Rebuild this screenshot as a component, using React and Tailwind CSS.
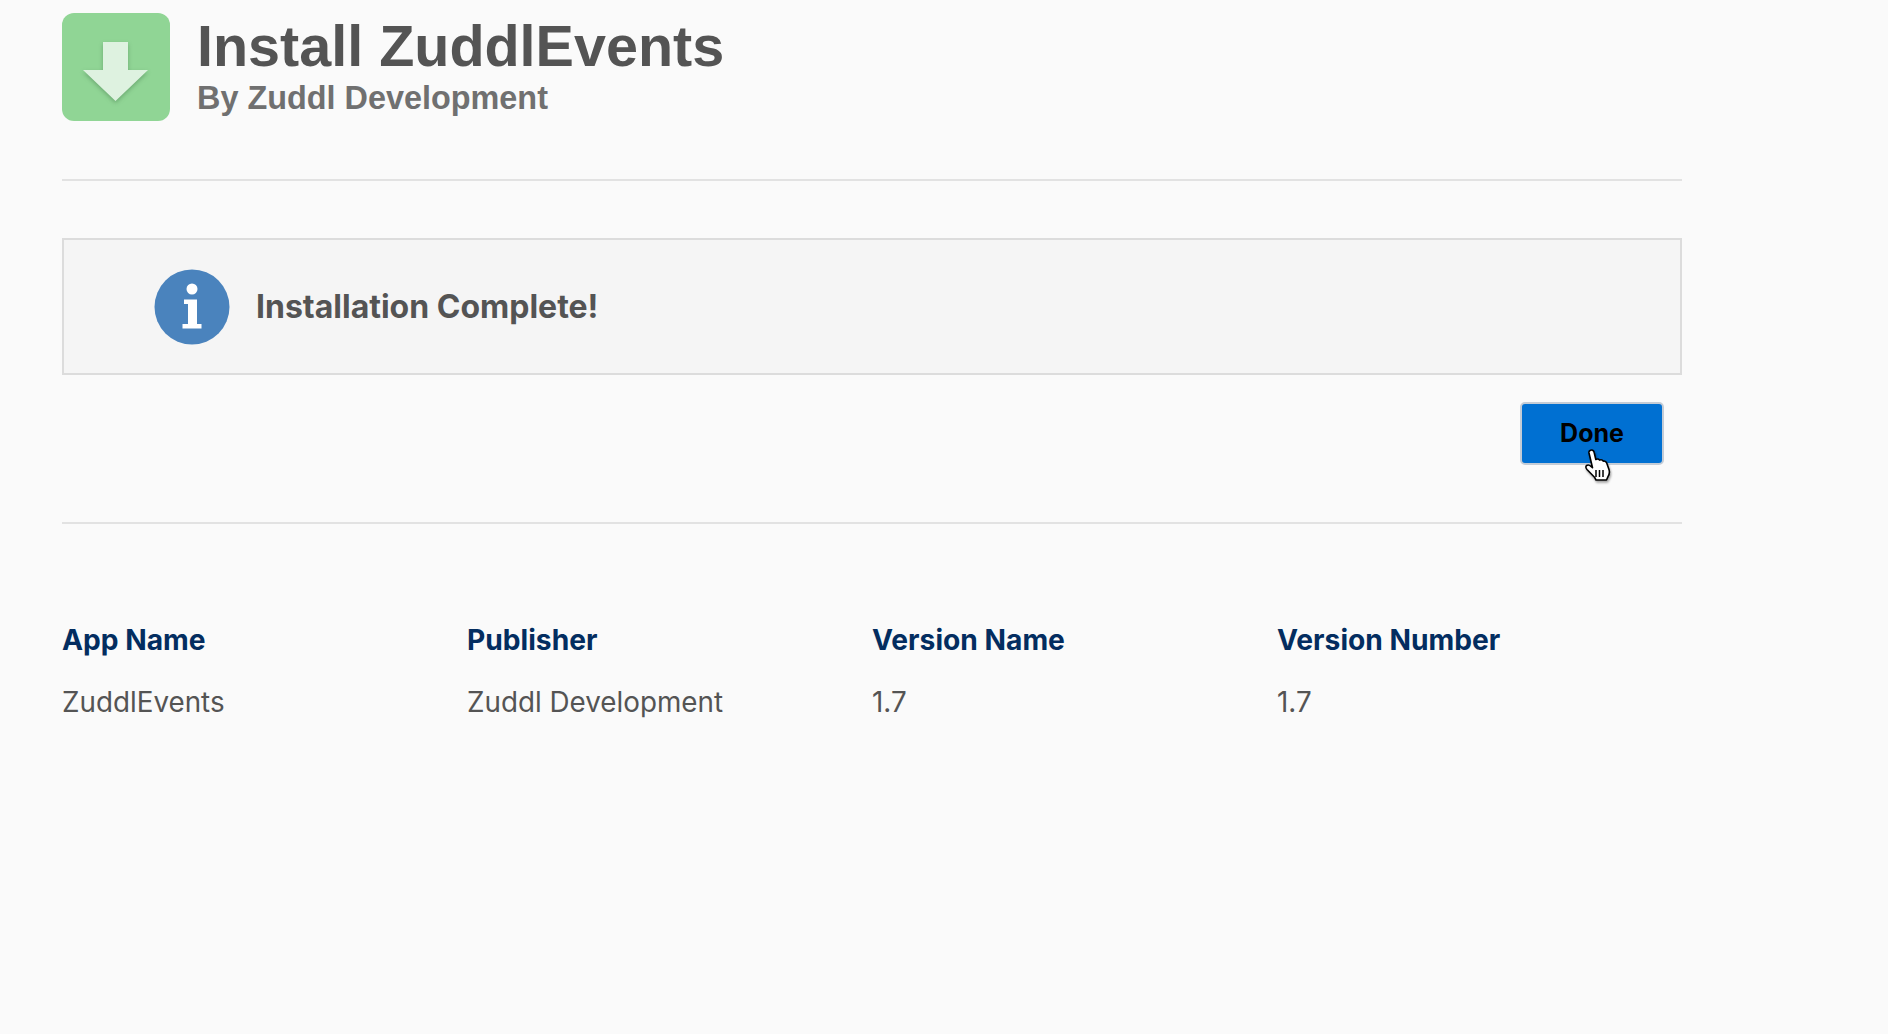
import React from 'react'

const columns = [
  { label: 'App Name', value: 'ZuddlEvents' },
  { label: 'Publisher', value: 'Zuddl Development' },
  { label: 'Version Name', value: '1.7' },
  { label: 'Version Number', value: '1.7' },
]

function AppIcon() {
  return (
    <div className="w-[108px] h-[108px] shrink-0 rounded-[12px] bg-[#90d595] flex items-center justify-center">
      <svg width="108" height="108" viewBox="0 0 108 108" className="drop-shadow-[0_2px_2px_rgba(40,90,50,0.35)]">
        <path d="M41 29h25v28h20L53.500 88 21 57h20z" fill="#def2e0" />
      </svg>
    </div>
  )
}

function InfoIcon() {
  return (
    <svg width="76" height="76" viewBox="0 0 76 76" className="shrink-0">
      <circle cx="38" cy="38" r="37.500" fill="#4a83bd" />
      <circle cx="38" cy="20" r="5.500" fill="#ffffff" />
      <path d="M30 30.500h13v24.500h4.500v4.500h-19V55H34V35h-4z" fill="#ffffff" />
    </svg>
  )
}

function HandCursor() {
  return (
    <svg width="28" height="34" viewBox="0 0 28 34" className="absolute left-[62px] top-[44px] drop-shadow-[1px_2px_1px_rgba(0,0,0,0.35)]">
      <path
        d="M6 2.500c1.800-1.200 3.800 0 4.200 2l1.600 7c1.500-.8 3-.5 3.800.6 1.400-.6 2.900-.2 3.600 1 1.500-.3 3 .5 3.500 2l2.300 6.500c.8 2.500.3 5-1 7l-1.500 3.400H12l-1.500-2.800L3 21.500c-1.300-1.500-1.500-3.200-.4-4 1.300-.9 3-.4 4.400.8l1.500 1.400L5 5c-.2-1 .2-2 1-2.500z"
        fill="#ffffff"
        stroke="#000000"
        strokeWidth="1.600"
        strokeLinejoin="round"
      />
      <path d="M12 22v7M15.500 22v7M19 22v7" stroke="#000000" strokeWidth="1.500" fill="none" />
    </svg>
  )
}

export default function App() {
  return (
    <div className="min-h-screen bg-[#fafafa] pl-[62px] pt-[13px] font-['Inter',sans-serif]">
      <div className="w-[1620px]">
        <header className="flex items-start gap-[27px] h-[168px] border-b-2 border-[#e2e2e2]">
          <AppIcon />
          <div className="pt-[1px] font-['Liberation_Sans',Arial,sans-serif] font-bold">
            <h1 className="text-[57.500px] leading-[64px] text-[#545454]">Install ZuddlEvents</h1>
            <p className="text-[32.400px] leading-[40px] text-[#707070]">By Zuddl Development</p>
          </div>
        </header>

        <div className="mt-[57px] h-[137px] bg-[#f5f5f5] border-2 border-[#dcdcdc] flex items-center pl-[90px] gap-[26px]">
          <InfoIcon />
          <span className="text-[32px] font-bold text-[#545454]">Installation Complete!</span>
        </div>

        <div className="h-[149px] border-b-2 border-[#e2e2e2] pt-[27px] pr-[18px] flex justify-end items-start">
          <button className="relative w-[144px] h-[63px] rounded-[5px] bg-[#0070d2] border-2 border-[#c4ccd6] text-[25px] font-bold text-black">
            Done
            <HandCursor />
          </button>
        </div>

        <div className="grid grid-cols-4 mt-[94px]">
          {columns.map((col) => (
            <div key={col.label}>
              <div className="text-[28.200px] leading-[44px] font-bold text-[#032d60]">{col.label}</div>
              <div className="mt-[18px] text-[27.800px] leading-[44px] text-[#545454]">{col.value}</div>
            </div>
          ))}
        </div>
      </div>
    </div>
  )
}
